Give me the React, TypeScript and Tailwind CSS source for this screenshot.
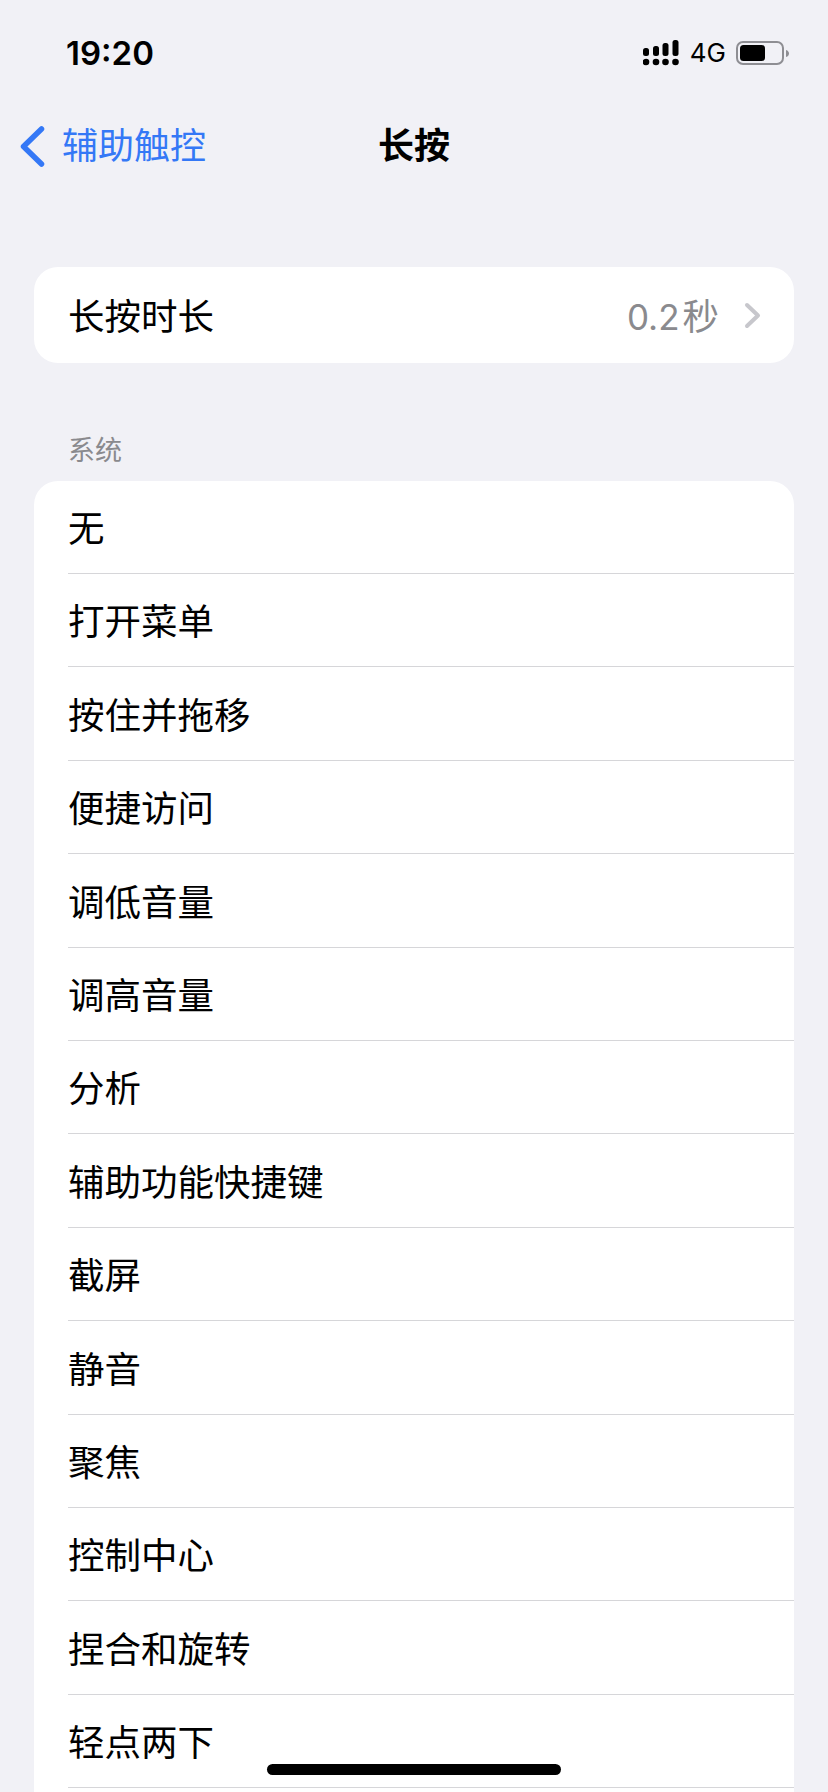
const actions = [
  "无",
  "打开菜单",
  "按住并拖移",
  "便捷访问",
  "调低音量",
  "调高音量",
  "分析",
  "辅助功能快捷键",
  "截屏",
  "静音",
  "聚焦",
  "控制中心",
  "捏合和旋转",
  "轻点两下",
];

function SignalIcon() {
  const cols = [
    { x: 642, top: 48 },
    { x: 652, top: 46 },
    { x: 661.5, top: 43 },
    { x: 671.5, top: 40 },
  ];
  return (
    <svg width="36" height="26" viewBox="642 40 36 26" fill="#000">
      {cols.map((c) => (
        <g key={c.x}>
          <rect x={c.x} y={c.top} width="6" height={56 - c.top} rx="2.5" />
          <circle cx={c.x + 3} cy="62" r="3.3" />
        </g>
      ))}
    </svg>
  );
}

function BatteryIcon() {
  return (
    <svg width="54" height="24" viewBox="736 40 54 24" fill="none">
      <rect x="737" y="41" width="46" height="22" rx="6" stroke="#8e8e93" strokeWidth="2" />
      <rect x="740" y="44" width="25" height="16" rx="3.5" fill="#000" />
      <path d="M786 49c2 .6 3 2 3 3.5s-1 3-3 3.5z" fill="#8e8e93" />
    </svg>
  );
}

export default function App() {
  return (
    <div className="relative h-[1792px] w-[828px] overflow-hidden bg-[#f1f1f6] font-['Inter','Noto_Sans_CJK_SC',sans-serif] text-black">
      {/* status bar */}
      <div className="flex h-[106px] items-center justify-between pr-[38px] pl-[66px]">
        <span className="text-[33px] leading-none font-semibold">19:20</span>
        <div className="flex items-center">
          <SignalIcon />
          <span className="mr-[10px] ml-[11px] text-[26px] leading-none">4G</span>
          <BatteryIcon />
        </div>
      </div>

      {/* nav */}
      <div className="relative flex h-[80px] items-center justify-center">
        <div className="absolute top-0 left-[20px] flex h-full items-center text-[#3478f6]">
          <svg width="25" height="41" viewBox="0 0 25 41" fill="none">
            <path d="M21.5 3 3.5 20.5l18 17.5" stroke="currentColor" strokeWidth="5.5" strokeLinecap="round" strokeLinejoin="round" />
          </svg>
          <span className="ml-[17px] text-[36px] leading-none">辅助触控</span>
        </div>
        <span className="text-[36px] leading-none font-bold">长按</span>
      </div>

      {/* duration */}
      <div className="mx-[34px] mt-[81px] flex h-[96px] items-center justify-between rounded-[24px] bg-white pt-[4px] pr-[32px] pl-[34px]">
        <span className="text-[36.5px] leading-none">长按时长</span>
        <div className="flex items-center">
          <span className="text-[35px] leading-none text-[#8a8a8e]">
            0.2<span className="ml-[3px] text-[36.5px]">秒</span>
          </span>
          <svg className="mb-[4px] ml-[25px]" width="18" height="27" viewBox="0 0 18 27" fill="none">
            <path d="M3 3l11 10.5L3 24" stroke="#c7c7cc" strokeWidth="4" strokeLinecap="round" strokeLinejoin="round" />
          </svg>
        </div>
      </div>

      {/* system actions */}
      <div className="mt-[69px] ml-[68px] text-[27px] leading-[38px] text-[#8a8a8e]">系统</div>
      <div className="mx-[34px] mt-[11px] rounded-t-[24px] bg-white pb-[40px] pl-[34px]">
        {actions.map((label) => (
          <div key={label} className="flex h-[93.4px] items-center border-b border-[#d6d6d9] pt-[5px] text-[36.5px] leading-none first:h-[93px]">
            {label}
          </div>
        ))}
      </div>

      {/* home indicator */}
      <div className="absolute top-[1764px] left-[267px] h-[11px] w-[294px] rounded-full bg-black" />
    </div>
  );
}
